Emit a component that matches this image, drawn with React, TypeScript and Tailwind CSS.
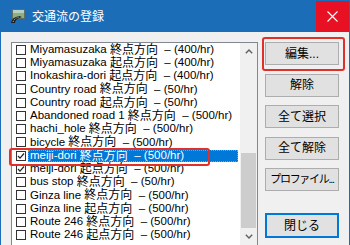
import { useState } from "react";

type Row = { name: string; dir: string; rate: string; checked?: boolean };

const rows: Row[] = [
  { name: "Miyamasuzaka", dir: "終点方向", rate: "400" },
  { name: "Miyamasuzaka", dir: "起点方向", rate: "400" },
  { name: "Inokashira-dori", dir: "起点方向", rate: "400" },
  { name: "Country road", dir: "終点方向", rate: "50" },
  { name: "Country road", dir: "起点方向", rate: "50" },
  { name: "Abandoned road 1", dir: "終点方向", rate: "500" },
  { name: "hachi_hole", dir: "終点方向", rate: "500" },
  { name: "bicycle", dir: "終点方向", rate: "500" },
  { name: "meiji-dori", dir: "終点方向", rate: "500", checked: true },
  { name: "meiji-dori", dir: "起点方向", rate: "500", checked: true },
  { name: "bus stop", dir: "終点方向", rate: "50" },
  { name: "Ginza line", dir: "終点方向", rate: "500" },
  { name: "Ginza line", dir: "起点方向", rate: "500" },
  { name: "Route 246", dir: "終点方向", rate: "500" },
  { name: "Route 246", dir: "起点方向", rate: "500" },
];

const buttons = [
  { label: "編集...", cls: "text-[12px]" },
  { label: "解除", cls: "text-[12px]" },
  { label: "全て選択", cls: "text-[12px]" },
  { label: "全て解除", cls: "text-[12px]" },
  { label: "プロファイル...", cls: "text-[11px] tracking-[-1.3px]" },
];

function AppIcon() {
  return (
    <svg width="16" height="16" viewBox="0 0 16 16">
      <rect x="2" y="1" width="13" height="10" fill="#5d6d6a" />
      <rect x="3" y="2" width="11" height="8" fill="#8fb07a" />
      <rect x="3" y="2" width="11" height="3" fill="#b8cfc6" />
      <path d="M1 15 C2 10 6 9 9 8 L12 9 C8 10 5 12 5 15 Z" fill="#1d1d1d" />
      <path d="M3 14 C4 11 6 10 9 9" stroke="#d8d8d8" strokeWidth="0.8" strokeDasharray="1.2 1" fill="none" />
    </svg>
  );
}

function Check({ on }: { on?: boolean }) {
  return (
    <div className="flex h-[10px] w-[10px] shrink-0 items-center justify-center border border-[#333333] bg-white">
      {on && (
        <svg width="8" height="8" viewBox="0 0 8 8">
          <polyline points="1,4 3,6.2 7,1.5" fill="none" stroke="#222" strokeWidth="1.2" />
        </svg>
      )}
    </div>
  );
}

function Chevron({ down }: { down?: boolean }) {
  return (
    <svg width="8" height="5" viewBox="0 0 8 5">
      <polyline
        points={down ? "0.8,0.8 4,4 7.2,0.8" : "0.8,4.2 4,1 7.2,4.2"}
        fill="none"
        stroke="#606060"
        strokeWidth="1.4"
      />
    </svg>
  );
}

export default function App() {
  const [selected, setSelected] = useState(8);

  return (
    <div className="relative flex h-[245px] w-[350px] flex-col overflow-hidden border-x border-[#1c6db8] bg-[#f0f0f0] font-['Liberation_Sans','Noto_Sans_CJK_JP',sans-serif]">
      <div className="flex h-[32px] shrink-0 items-start bg-[#1c6db8]">
        <div className="flex h-[31px] flex-1 items-center gap-[6px] pl-[9px]">
          <AppIcon />
          <span className="font-['Noto_Sans_CJK_JP',sans-serif] text-[12px] text-white">交通流の登録</span>
        </div>
        <button className="mt-[1px] flex h-[31px] w-[33px] items-center justify-center bg-[#e81123]">
          <svg width="11" height="11" viewBox="0 0 11 11">
            <path d="M0.5 0.5 L10.5 10.5 M10.5 0.5 L0.5 10.5" stroke="white" strokeWidth="1.1" />
          </svg>
        </button>
      </div>

      <div className="flex flex-1 pl-[10px] pt-[10px]">
        <div className="flex h-[204px] w-[247px] shrink-0 border border-[#828790] bg-white">
          <div className="flex flex-1 flex-col pl-[4px]">
            {rows.map((r, i) => {
              const sel = i === selected;
              return (
                <div key={i} className="flex h-[13.25px] items-center" onClick={() => setSelected(i)}>
                  <Check on={r.checked} />
                  <div
                    className={
                      sel
                        ? "ml-[2px] mr-[2px] flex h-[12px] flex-1 items-center whitespace-nowrap border border-dotted border-[#e08a2a] bg-[#0078d7] pl-[1px] text-[11.5px] leading-none text-white"
                        : "ml-[3px] flex h-[12px] flex-1 items-center whitespace-nowrap pl-[1px] text-[11.5px] leading-none text-black"
                    }
                  >
                    <span>{r.name}&nbsp;</span>
                    <span className="text-[12px]">{r.dir}</span>
                    <span>&nbsp;&nbsp;–&nbsp;({r.rate}/hr)</span>
                  </div>
                </div>
              );
            })}
          </div>
          <div className="flex w-[17px] shrink-0 flex-col bg-[#f0f0f0]">
            <div className="flex h-[17px] items-center justify-center">
              <Chevron />
            </div>
            <div className="flex flex-1 flex-col justify-end">
              <div className="mx-[1px] h-[75px] bg-[#cdcdcd]" />
            </div>
            <div className="flex h-[17px] items-center justify-center">
              <Chevron down />
            </div>
          </div>
        </div>

        <div className="ml-[7px] flex w-[74px] flex-col">
          <div className="flex flex-col gap-[8.5px]">
            {buttons.map((b) => (
              <button
                key={b.label}
                className={`flex h-[23px] items-center justify-center whitespace-nowrap border border-[#adadad] bg-[#e1e1e1] text-black ${b.cls}`}
              >
                {b.label}
              </button>
            ))}
          </div>
          <button className="mt-[22px] flex h-[25px] items-center justify-center border-2 border-[#0078d7] bg-[#e1e1e1] text-[12px] text-black">
            閉じる
          </button>
        </div>
      </div>

      <div className="pointer-events-none absolute left-[8px] top-[148px] h-[18px] w-[201px] rounded-[3px] border-2 border-[#e0302a]" />
      <div className="pointer-events-none absolute left-[261px] top-[37px] h-[34px] w-[83px] rounded-[3px] border-2 border-[#e0302a]" />
    </div>
  );
}
